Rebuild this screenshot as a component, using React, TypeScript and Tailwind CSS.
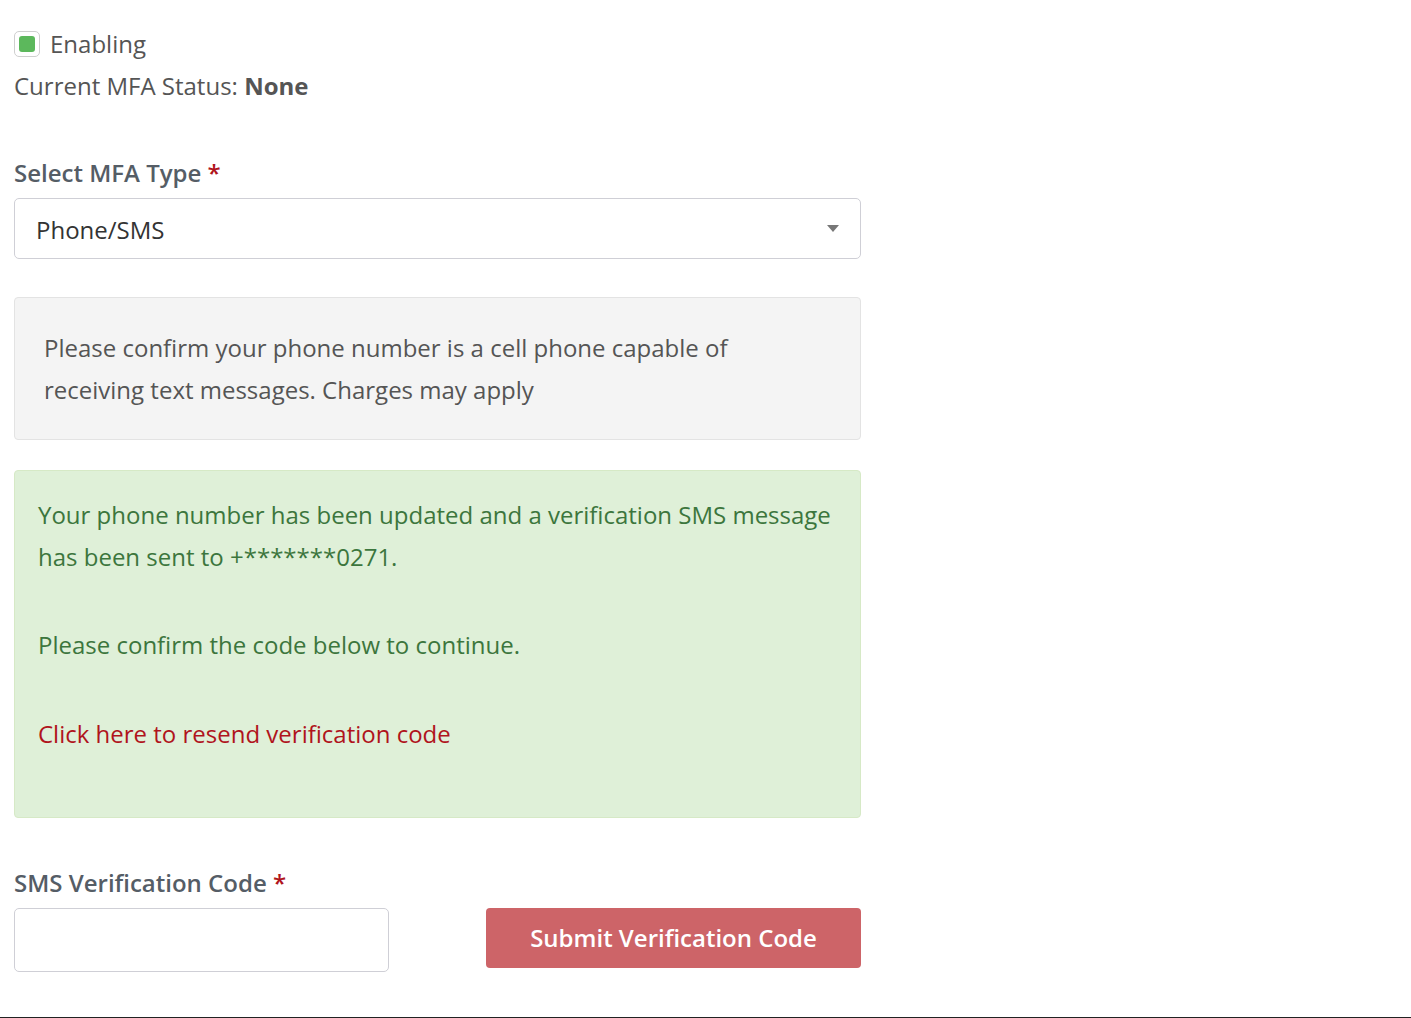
import React, { useState } from "react";

const font = { fontFamily: '"Open Sans", "Liberation Sans", sans-serif' };

const Required = () => <span className="text-[#b0141c]"> *</span>;

export default function App() {
  const [enabled, setEnabled] = useState(true);
  const [mfaType, setMfaType] = useState("Phone/SMS");
  const [code, setCode] = useState("");

  return (
    <div className="min-h-[1018px] bg-white text-[#555]" style={font}>
      <div className="w-[847px] ml-[14px] pt-[30px]">
        <label className="flex items-center h-[28px] gap-[10px] cursor-pointer">
          <button
            type="button"
            onClick={() => setEnabled(!enabled)}
            className="w-[26px] h-[26px] rounded-[5px] border border-[#cfcfcf] bg-white flex items-center justify-center"
          >
            {enabled && <span className="block w-[16px] h-[16px] rounded-[3px] bg-[#5cb85c]" />}
          </button>
          <span className="text-[24px] leading-[28px] text-[#555]">Enabling</span>
        </label>

        <div className="mt-[12px] text-[24px] leading-[32px] text-[#555]">
          Current MFA Status: <span className="font-bold">None</span>
        </div>

        <div className="mt-[55px] text-[24px] leading-[32px] font-semibold text-[#555d66]">
          Select MFA Type
          <Required />
        </div>

        <div className="relative mt-[9px] h-[61px]">
          <select
            value={mfaType}
            onChange={(e) => setMfaType(e.target.value)}
            className="appearance-none w-full h-full rounded-[5px] border border-[#cfcfd6] bg-white pl-[21px] pt-[2px] text-[24px] text-[#333] outline-none"
            style={font}
          >
            <option>Phone/SMS</option>
            <option>Authenticator App</option>
            <option>Email</option>
          </select>
          <svg
            className="pointer-events-none absolute right-[22px] top-[27px]"
            width="12"
            height="7"
            viewBox="0 0 12 7"
          >
            <path d="M0 0 L12 0 L6 7 Z" fill="#777" />
          </svg>
        </div>

        <div className="mt-[38px] rounded-[4px] border border-[#e3e3e3] bg-[#f4f4f4] pl-[29px] pr-[20px] pt-[29px] pb-[28px] text-[24px] leading-[42px] text-[#555]">
          Please confirm your phone number is a cell phone capable of
          <br />
          receiving text messages. Charges may apply
        </div>

        <div className="mt-[30px] rounded-[4px] border border-[#d6e9c6] bg-[#dff0d8] pl-[23px] pr-[20px] pt-[23px] pb-[62px] text-[24px] leading-[42px] text-[#3c763d]">
          <p>
            Your phone number has been updated and a verification SMS message has been sent to
            +*******0271.
          </p>
          <p className="mt-[46px]">Please confirm the code below to continue.</p>
          <p className="mt-[47px]">
            <a href="#" className="text-[#b0141c]" onClick={(e) => e.preventDefault()}>
              Click here to resend verification code
            </a>
          </p>
        </div>

        <div className="mt-[49px] text-[24px] leading-[32px] font-semibold text-[#555d66]">
          SMS Verification Code
          <Required />
        </div>

        <div className="mt-[9px] flex justify-between items-start">
          <input
            value={code}
            onChange={(e) => setCode(e.target.value)}
            className="w-[375px] h-[64px] rounded-[5px] border border-[#cfcfd6] bg-white px-[16px] text-[24px] outline-none"
            style={font}
          />
          <button
            type="button"
            className="w-[375px] h-[60px] rounded-[4px] bg-[#cd6468] text-white text-[24px] font-semibold"
            style={font}
          >
            Submit Verification Code
          </button>
        </div>
      </div>
      <div className="mt-[45px] h-[40px] bg-[#222]" />
    </div>
  );
}
